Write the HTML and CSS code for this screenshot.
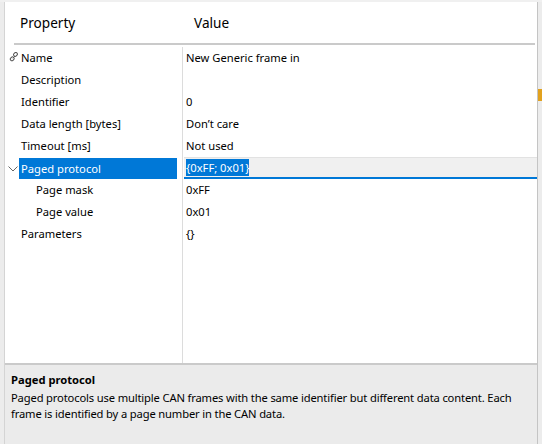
FILE: index.html
```html
<!DOCTYPE html>
<html>
<head>
<meta charset="utf-8">
<link rel="stylesheet" href="styles.css">
</head>
<body>
<div class="frame">
  <div class="edge-left"></div>
  <div class="main">
    <div class="header">
      <div class="h-prop">Property</div>
      <div class="h-val">Value</div>
    </div>
    <div class="grid">
      <div class="labels">
        <div class="row"><span class="icon"><svg width="10" height="10" viewBox="0 0 10 10"><g fill="none" stroke="#555" stroke-width="1"><rect x="4.5" y="0.8" width="4" height="3.2" rx="1.5" transform="rotate(-45 6.5 2.4)"/><rect x="1.2" y="5.2" width="4" height="3.2" rx="1.5" transform="rotate(-45 3.2 6.8)"/><line x1="3.8" y1="6.2" x2="6" y2="4"/></g></svg></span>Name</div>
        <div class="row">Description</div>
        <div class="row">Identifier</div>
        <div class="row">Data length [bytes]</div>
        <div class="row">Timeout [ms]</div>
        <div class="row selected"><span class="chev"><svg width="10" height="6" viewBox="0 0 10 6"><path d="M0.5 0.5 L5 5 L9.5 0.5" fill="none" stroke="#666" stroke-width="1"/></svg></span><span class="sel-bg">Paged protocol</span></div>
        <div class="row sub">Page mask</div>
        <div class="row sub">Page value</div>
        <div class="row">Parameters</div>
      </div>
      <div class="values">
        <div class="row">New Generic frame in</div>
        <div class="row"></div>
        <div class="row">0</div>
        <div class="row">Don’t care</div>
        <div class="row">Not used</div>
        <div class="row editing"><span class="hl">{0xFF; 0x01}</span></div>
        <div class="row">0xFF</div>
        <div class="row">0x01</div>
        <div class="row">{}</div>
      </div>
    </div>
    <div class="desc">
      <div class="desc-title">Paged protocol</div>
      <div class="desc-text">Paged protocols use multiple CAN frames with the same identifier but different data content. Each frame is identified by a page number in the CAN data.</div>
    </div>
  </div>
  <div class="edge-right"><div class="mark"></div></div>
</div>
</body>
</html>
```
FILE: styles.css
```css
html, body {
  margin: 0;
  padding: 0;
  width: 542px;
  height: 444px;
  overflow: hidden;
  background: #ffffff;
  font-family: "Noto Sans", "Open Sans", sans-serif;
  font-size: 11.2px;
  color: #000;
}
.frame {
  display: flex;
  height: 444px;
  box-sizing: border-box;
  border-top: 2px solid #f0f0f0;
}
.edge-left {
  width: 4px;
  background: #ececec;
  border-right: 1px solid #d4d4d4;
}
.edge-right {
  width: 4px;
  background: #ececec;
  border-left: 1px solid #c4c4c4;
  position: relative;
}
.mark {
  position: absolute;
  left: 0;
  top: 87px;
  width: 4px;
  height: 12px;
  background: #e2a21e;
}
.main {
  flex: 1;
  display: flex;
  flex-direction: column;
  min-width: 0;
}
.header {
  height: 41px;
  display: flex;
  align-items: center;
  margin-left: 9px;
  margin-right: 2px;
  border-bottom: 2px solid #cacaca;
  font-size: 13.6px;
}
.h-prop {
  width: 174px;
  padding-left: 6px;
}
.grid {
  flex: 1;
  display: flex;
  padding-top: 2px;
}
.labels {
  width: 177px;
  border-right: 1px solid #dcdcdc;
}
.values {
  flex: 1;
}
.row {
  height: 22px;
  line-height: 22px;
  display: flex;
  align-items: center;
  white-space: nowrap;
}
.labels .row {
  padding-left: 16px;
  position: relative;
}
.labels .row.sub {
  padding-left: 31px;
}
.icon {
  position: absolute;
  left: 4px;
  top: 5px;
  width: 10px;
  height: 10px;
  display: flex;
}
.chev {
  position: absolute;
  left: 3px;
  top: 9px;
  display: flex;
}
.row.selected {
  padding-left: 14px;
}
.sel-bg {
  flex: 1;
  background: #0078d7;
  color: #fff;
  padding-left: 2px;
  height: 21px;
  line-height: 21px;
  margin-right: 5px;
}
.values .row {
  padding-left: 3px;
}
.values .row.editing {
  margin-left: 1px;
  padding-left: 2px;
  background: #f0f0f0;
  border-top: 1px solid #e2e2e2;
  border-bottom: 2px solid #0078d7;
  height: 19px;
  line-height: 19px;
  box-sizing: content-box;
}
.hl {
  background: #0078d7;
  color: #fff;
  line-height: 17px;
}
.desc {
  height: 81px;
  box-sizing: border-box;
  border-top: 2px solid #cacaca;
  background: #ebebeb;
  padding: 6px 6px 0 6px;
}
.desc-title {
  font-weight: bold;
  line-height: 18px;
  margin-bottom: 1px;
}
.desc-text {
  line-height: 16px;
  letter-spacing: -0.15px;
}
```
